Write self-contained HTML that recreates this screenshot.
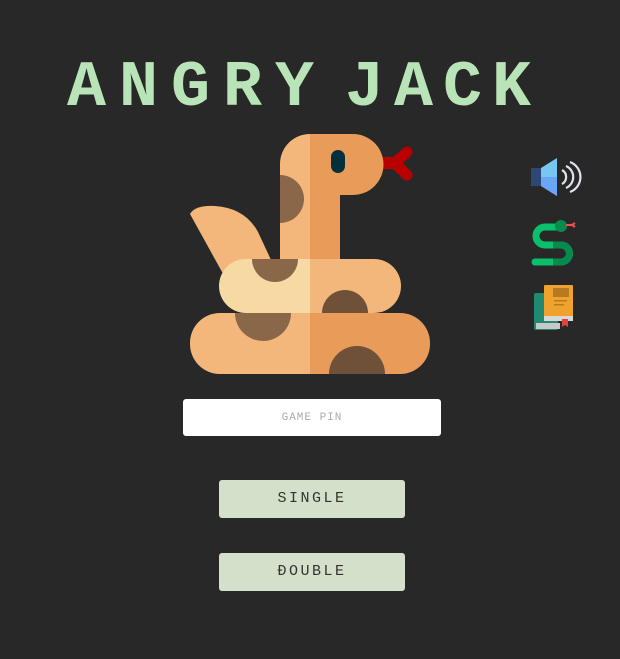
<!DOCTYPE html>
<html><head><style>
body{margin:0;width:620px;height:659px;background:#282828;overflow:hidden;position:relative;font-family:"Liberation Mono",monospace}
.t{position:absolute;top:56px;font-size:65px;color:#b9e4b8;line-height:1;white-space:pre;font-weight:bold}
.inp{position:absolute;left:183px;top:399px;width:258px;height:37px;background:#fff;border-radius:3px;text-align:center;line-height:38px;font-size:11px;color:#aaa;letter-spacing:1px}
.btn{position:absolute;left:219px;width:186px;height:38px;background:#d4e0c9;border-radius:3px;text-align:center;line-height:38px;font-size:15px;color:#333;letter-spacing:2.5px}
</style></head><body>
<div class="t" style="left:67px;letter-spacing:13px">ANGRY</div>
<div class="t" style="left:345px;letter-spacing:10px">JACK</div>
<svg style="position:absolute;left:0;top:0" width="620" height="400">
<defs>
<clipPath id="neck"><path d="M280 164a30 30 0 0 1 30-30h43a30 30 0 0 1 0 61h-13v70h-60z"/></clipPath>
<clipPath id="mid"><rect x="219" y="259" width="182" height="54" rx="27"/></clipPath>
<clipPath id="bot"><rect x="190" y="313" width="240" height="61" rx="30"/></clipPath>
</defs>
<path d="M190 214 Q195 205 215 206 Q245 208 258 232 L272 262 L232 290 Z" fill="#f4b77b"/>
<path d="M395 163 L407 152 M395 163 L407 175" stroke="#b90000" stroke-width="11" stroke-linecap="round"/>
<rect x="380" y="157" width="17" height="12" fill="#b90000"/>
<g clip-path="url(#neck)">
<rect x="270" y="130" width="40" height="140" fill="#f4b77b"/>
<rect x="310" y="130" width="90" height="140" fill="#e99b5a"/>
<circle cx="280" cy="199" r="24" fill="#8a6749"/>
</g>
<rect x="331" y="150" width="14" height="23" rx="7" fill="#03303d"/>
<g clip-path="url(#mid)">
<rect x="219" y="259" width="91" height="54" fill="#f7d9a3"/>
<rect x="310" y="259" width="91" height="54" fill="#f4b77b"/>
<circle cx="275" cy="259" r="23" fill="#8a6749"/>
<circle cx="345" cy="313" r="23" fill="#6f5039"/>
</g>
<g clip-path="url(#bot)">
<rect x="190" y="313" width="120" height="61" fill="#f4b77b"/>
<rect x="310" y="313" width="120" height="61" fill="#e99b5a"/>
<circle cx="263" cy="313" r="28" fill="#8a6749"/>
<circle cx="357" cy="374" r="28" fill="#6f5039"/>
</g>
<rect x="531" y="168" width="10" height="18" fill="#2c4778"/>
<path d="M541 168 L557 158 L557 196 L541 186 Z" fill="#76c8f2"/>
<path d="M541 177 L557 177 L557 196 L541 186 Z" fill="#6aa6f5"/>
<path d="M562 170 a8 8 0 0 1 0 14 M566 166 a12 12 0 0 1 0 22 M570 162 a16 16 0 0 1 0 30" stroke="#dfe4ec" stroke-width="2.2" fill="none"/>
<path d="M562 227 H545 a9 9 0 0 0 0 18 H561 a8.5 8.5 0 0 1 0 17 H535" stroke="#0cbf6b" stroke-width="7" fill="none" stroke-linecap="round"/>
<path d="M553 245 H561 a8.5 8.5 0 0 1 0 17 H553" stroke="#078a4e" stroke-width="7" fill="none"/>
<circle cx="561" cy="226" r="6" fill="#078a4e"/>
<path d="M566 225 H572 l3 -2 M572 225 l3 2" stroke="#f05050" stroke-width="2" fill="none"/>
<rect x="534" y="293" width="24" height="37" rx="2" fill="#1f8a70"/>
<rect x="536" y="323" width="24" height="6" fill="#c8c8c8"/>
<rect x="544" y="285" width="29" height="34" rx="1" fill="#f0a22e"/>
<rect x="553" y="288" width="16" height="9" fill="#b87a1e"/>
<rect x="554" y="300" width="13" height="1.5" fill="#b87a1e"/>
<rect x="554" y="304" width="10" height="1.5" fill="#b87a1e"/>
<rect x="544" y="316" width="29" height="5" fill="#d8d8d8"/>
<path d="M562 319 h6 v8 l-3 -2 l-3 2 z" fill="#e0453a"/>
</svg>
<div class="inp">GAME PIN</div>
<div class="btn" style="top:480px">SINGLE</div>
<div class="btn" style="top:553px">ĐOUBLE</div>
</body></html>
